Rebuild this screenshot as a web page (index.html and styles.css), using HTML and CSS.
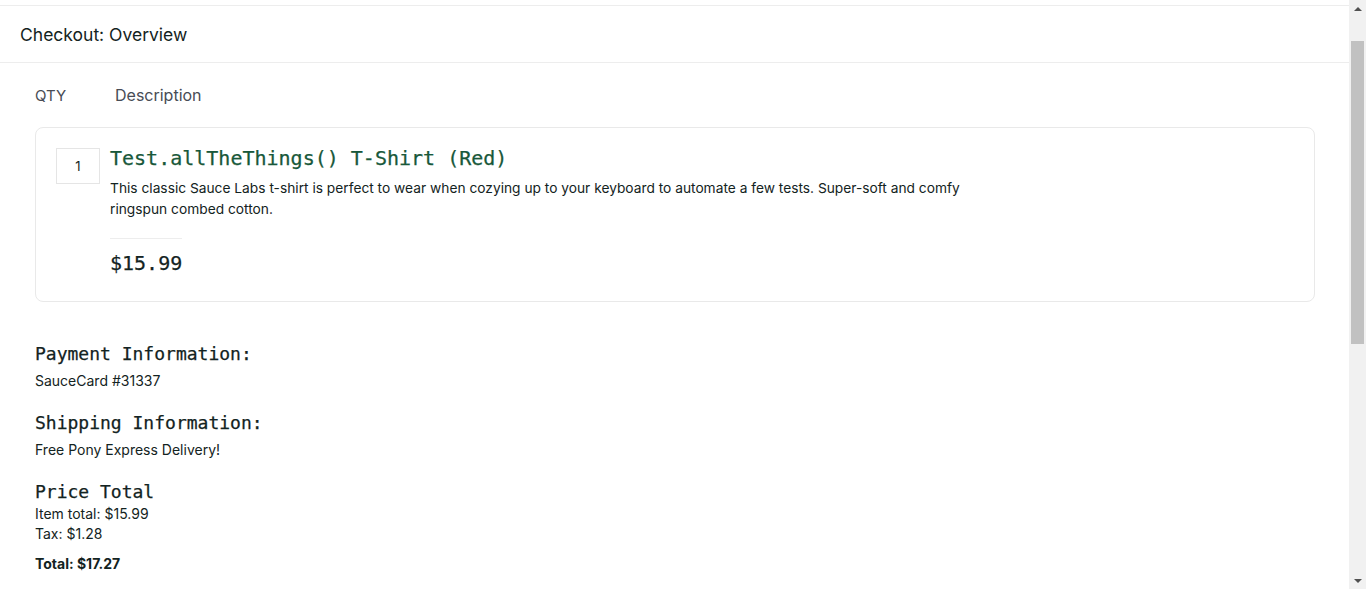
FILE: index.html
```html
<!DOCTYPE html>
<html lang="en">
<head>
<meta charset="utf-8">
<title>Swag Labs</title>
<link rel="stylesheet" href="styles.css">
</head>
<body>
<div class="app">
  <div class="page">
    <div class="primary-header"></div>
    <div class="secondary-header"><span class="title">Checkout: Overview</span></div>
    <div class="cart-list">
      <div class="cart-labels">
        <span class="qty-label">QTY</span>
        <span class="desc-label">Description</span>
      </div>
      <div class="cart-item">
        <div class="cart-qty">1</div>
        <div class="item-body">
          <div class="item-name">Test.allTheThings() T-Shirt (Red)</div>
          <div class="item-desc">This classic Sauce Labs t-shirt is perfect to wear when cozying up to your keyboard to automate a few tests. Super-soft and comfy ringspun combed cotton.</div>
          <div class="item-price">$15.99</div>
        </div>
      </div>
    </div>
    <div class="summary">
      <div class="summary-label">Payment Information:</div>
      <div class="summary-value">SauceCard #31337</div>
      <div class="summary-label">Shipping Information:</div>
      <div class="summary-value">Free Pony Express Delivery!</div>
      <div class="summary-label price-label">Price Total</div>
      <div class="subtotal">Item total: $15.99</div>
      <div class="tax">Tax: $1.28</div>
      <div class="total">Total: $17.27</div>
    </div>
  </div>
  <div class="scrollbar">
    <div class="arrow-up"></div>
    <div class="track">
      <div class="thumb"></div>
    </div>
    <div class="arrow-down"></div>
  </div>
</div>
</body>
</html>
```
FILE: styles.css
```css
html, body {
  margin: 0;
  padding: 0;
  height: 589px;
  overflow: hidden;
  background: #ffffff;
}
body {
  font-family: Inter, "Noto Sans", sans-serif;
  color: #132322;
}
.app {
  display: flex;
  height: 589px;
}
.page {
  flex: 1;
  min-width: 0;
}
.primary-header {
  height: 5px;
  border-bottom: 1px solid #ededed;
}
.secondary-header {
  height: 56px;
  border-bottom: 1px solid #ededed;
  display: flex;
  align-items: center;
  padding-left: 20px;
}
.title {
  font-size: 17.5px;
  font-weight: 400;
  color: #132322;
}
.cart-list {
  padding: 0 34px 0 35px;
}
.cart-labels {
  display: flex;
  height: 64px;
  align-items: center;
  font-size: 16px;
  color: #484c55;
}
.qty-label {
  width: 80px;
  font-size: 15px;
}
.cart-item {
  display: flex;
  border: 1px solid #e9e9e9;
  border-radius: 8px;
  padding: 20px 20px 26px 20px;
}
.cart-qty {
  width: 42px;
  height: 34px;
  border: 1px solid #e5e5e5;
  display: flex;
  align-items: center;
  justify-content: center;
  font-size: 13px;
  margin-right: 10px;
  flex: none;
}
.item-body {
  display: flex;
  flex-direction: column;
  align-items: flex-start;
}
.item-name {
  font-family: "DejaVu Sans Mono", "Liberation Mono", monospace;
  font-size: 20px;
  line-height: 24px;
  color: #18583a;
  margin-top: -2px;
  -webkit-text-stroke: 0.25px #18583a;
}
.item-desc {
  font-size: 13.75px;
  line-height: 21px;
  max-width: 870px;
  margin-top: 8px;
}
.item-price {
  font-family: "DejaVu Sans Mono", "Liberation Mono", monospace;
  font-size: 20px;
  line-height: 24px;
  border-top: 1px solid #ededed;
  margin-top: 18px;
  padding-top: 12px;
  color: #132322;
  -webkit-text-stroke: 0.25px #132322;
}
.summary {
  padding: 0 35px;
}
.summary-label {
  font-family: "DejaVu Sans Mono", "Liberation Mono", monospace;
  font-size: 18px;
  line-height: 24px;
  margin-top: 20px;
  -webkit-text-stroke: 0.25px #132322;
}
.summary-label:first-child {
  margin-top: 40px;
}
.summary-value {
  font-size: 14px;
  line-height: 20px;
  margin-top: 5px;
}
.price-label {
  margin-top: 20px;
}
.subtotal, .tax {
  font-size: 14px;
  line-height: 20px;
}
.subtotal {
  margin-top: 0;
}
.total {
  font-size: 14px;
  font-weight: 700;
  line-height: 20px;
  margin-top: 10px;
}
.scrollbar {
  width: 17px;
  flex: none;
  background: #f1f1f1;
  display: flex;
  flex-direction: column;
}
.arrow-up, .arrow-down {
  height: 17px;
  display: flex;
  align-items: center;
  justify-content: center;
}
.arrow-up::before {
  content: "";
  border-left: 4px solid transparent;
  border-right: 4px solid transparent;
  border-bottom: 4px solid #505050;
}
.arrow-down::before {
  content: "";
  border-left: 4px solid transparent;
  border-right: 4px solid transparent;
  border-top: 4px solid #505050;
}
.track {
  flex: 1;
  padding: 24px 2px 0 2px;
}
.thumb {
  height: 303px;
  background: #c1c1c1;
}
```
